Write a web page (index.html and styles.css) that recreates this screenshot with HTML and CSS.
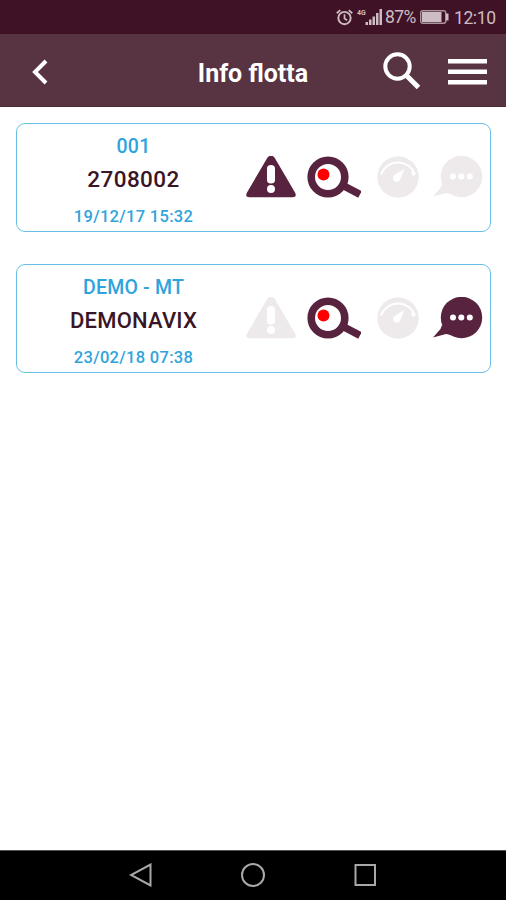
FILE: index.html
```html
<!DOCTYPE html>
<html lang="it">
<head>
  <meta charset="utf-8">
  <title>Info flotta</title>
  <link rel="stylesheet" href="styles.css">
</head>
<body>
  <!-- Icone condivise -->
  <svg class="hidden">
    <symbol id="icon-alert" viewBox="0 0 50 44">
      <path fill="currentColor" fill-rule="evenodd" d="M21.500 1.500Q25 -2.500 28.500 1.500L49 36.500Q51.300 41 46.500 41.300H3.500Q-1.300 41 1 36.500ZM21 12.500V24Q21 27.500 25 27.500Q29 27.500 29 24V12.500Q29 9 25 9Q21 9 21 12.500ZM25 29A4 4 0 1 0 25 37A4 4 0 1 0 25 29Z"/>
    </symbol>
    <symbol id="icon-locate" viewBox="0 0 54 44">
      <circle cx="21" cy="21" r="16.800" fill="none" stroke="currentColor" stroke-width="7.600"/>
      <path d="M36 29.500L53 38.500" stroke="currentColor" stroke-width="7.500"/>
      <circle cx="16.500" cy="18.500" r="6" fill="#ff0000"/>
    </symbol>
    <symbol id="icon-gauge" viewBox="0 0 50 44">
      <circle cx="26" cy="21" r="20.700" fill="currentColor"/>
      <path d="M9 18.500A18 18 0 0 1 43 18.500" fill="none" stroke="#fff" stroke-width="2"/>
      <path d="M39 14.500L43.500 18.500L40.500 20Z" fill="#fff"/>
      <path d="M23.500 18.500L32.500 13L28.500 22.500A3.700 3.700 0 1 1 23.500 18.500Z" fill="#fff"/>
    </symbol>
    <symbol id="icon-message" viewBox="0 0 50 44">
      <circle cx="28.500" cy="20.500" r="20.700" fill="currentColor"/>
      <path d="M9 28L7.500 32L0 40.500L13 37L18 38Z" fill="currentColor"/>
      <g fill="#fff">
        <circle cx="20" cy="20.500" r="3"/>
        <circle cx="28.300" cy="20.500" r="3"/>
        <circle cx="36.800" cy="20.500" r="3"/>
      </g>
    </symbol>
  </svg>

  <div class="status-bar">
    <svg class="alarm" viewBox="0 0 16 16" fill="none" stroke="currentColor">
      <circle cx="8" cy="8.500" r="5.800" stroke-width="1.800"/>
      <path d="M8 5V9L10.500 10.500M.7 4L4 1M15.300 4L12 1" stroke-width="1.600"/>
    </svg>
    <svg class="signal" viewBox="0 0 26 16" fill="currentColor">
      <text x="0" y="6" class="network">4G</text>
      <path d="M8.500 13h2.500v3H8.500zM12 10.500h2.500V16H12zM15.500 7.500H18V16h-2.500zM19 4h2.500v12H19zM22.500 0H25v16h-2.500z"/>
    </svg>
    <span class="percent">87%</span>
    <svg class="battery" viewBox="0 0 29 14">
      <rect x=".7" y=".7" width="25" height="12.600" rx="2" fill="none" stroke="#ab969f" stroke-width="1.400"/>
      <rect x="2" y="2" width="19.500" height="10" fill="currentColor"/>
      <rect x="26" y="3.500" width="2.500" height="7" fill="currentColor"/>
    </svg>
    <span class="clock">12:10</span>
  </div>

  <header class="header">
    <svg class="back" viewBox="0 0 16 26"><path d="M14 2L3 13L14 24" fill="none" stroke="#fff" stroke-width="4"/></svg>
    <h1>Info flotta</h1>
    <svg class="search" viewBox="0 0 38 38" fill="none" stroke="#fff">
      <circle cx="14.500" cy="14.500" r="12.200" stroke-width="4"/>
      <path d="M23 23L35.500 35.500" stroke-width="5"/>
    </svg>
    <svg class="menu" viewBox="0 0 39 26"><path d="M0 0h39v4.500H0zM0 10.500h39V15H0zM0 21h39v4.500H0z" fill="#fff"/></svg>
  </header>

  <main class="fleet">
    <div class="card">
      <div class="info">
        <div class="group">001</div>
        <div class="name">2708002</div>
        <div class="date">19/12/17 15:32</div>
      </div>
      <div class="actions">
        <svg class="icon"><use href="#icon-alert"/></svg>
        <svg class="icon locate"><use href="#icon-locate"/></svg>
        <svg class="icon off"><use href="#icon-gauge"/></svg>
        <svg class="icon off"><use href="#icon-message"/></svg>
      </div>
    </div>
    <div class="card">
      <div class="info">
        <div class="group">DEMO - MT</div>
        <div class="name vehicle">DEMONAVIX</div>
        <div class="date">23/02/18 07:38</div>
      </div>
      <div class="actions">
        <svg class="icon off"><use href="#icon-alert"/></svg>
        <svg class="icon locate"><use href="#icon-locate"/></svg>
        <svg class="icon off"><use href="#icon-gauge"/></svg>
        <svg class="icon"><use href="#icon-message"/></svg>
      </div>
    </div>
  </main>

  <nav class="nav-bar">
    <svg viewBox="0 0 24 24"><path d="M21.500 1.500V22.500L2 12Z"/></svg>
    <svg viewBox="0 0 24 24"><circle cx="12" cy="12" r="11"/></svg>
    <svg viewBox="0 0 24 24"><rect x="2.500" y="2" width="19.500" height="20"/></svg>
  </nav>
</body>
</html>
```

FILE: styles.css
```css
* {
  box-sizing: border-box;
}

body {
  margin: 0;
  height: 900px;
  display: flex;
  flex-direction: column;
  background-color: #fff;
  font-family: Roboto, sans-serif;
  overflow: hidden;
}

svg {
  display: block;
  flex: none;
}

.hidden {
  display: none;
}

.status-bar {
  height: 34px;
  padding-right: 10px;
  display: flex;
  align-items: center;
  justify-content: flex-end;
  background-color: #3f1325;
  color: #cdbcc4;
}

.alarm {
  width: 17px;
  height: 17px;
  margin-right: 4px;
}

.signal {
  width: 26px;
  height: 16px;
  margin-right: 2px;
}

.network {
  font-size: 7px;
  font-weight: bold;
}

.percent,
.clock {
  font-size: 17.5px;
  line-height: 34px;
}

.percent {
  width: 35px;
  letter-spacing: -0.6px;
}

.battery {
  width: 29px;
  height: 14px;
}

.clock {
  width: 42px;
  margin-left: 5px;
  letter-spacing: -0.4px;
  padding-top: 1px;
}

.header {
  height: 73px;
  padding: 3px 19px 0 32px;
  display: flex;
  align-items: center;
  background-color: #583342;
  border-bottom: 1px solid #4d2838;
}

.back {
  width: 16px;
  height: 26px;
}

h1 {
  flex: 1;
  margin: 3px 0 0;
  padding-left: 75px;
  font-size: 25px;
  font-weight: bold;
  text-align: center;
  color: #fff;
}

.search {
  width: 38px;
  height: 38px;
  margin: 0 27px 1px 0;
}

.menu {
  width: 39px;
  height: 26px;
}

.fleet {
  flex: 1;
  padding: 16px 15px 0 16px;
}

.card {
  height: 109px;
  margin-bottom: 32px;
  display: flex;
  align-items: center;
  border: 1.5px solid #68bfe5;
  border-radius: 9px;
}

.info {
  width: 229px;
  padding: 13px 0 0 4px;
  font-weight: 500;
  text-align: center;
  color: #2fa4dc;
}

.group {
  font-size: 19.5px;
  line-height: 30px;
  letter-spacing: 0.2px;
}

.name {
  font-size: 22.5px;
  line-height: 35px;
  letter-spacing: 0.4px;
  color: #3a1526;
}

.vehicle {
  font-size: 22px;
  letter-spacing: 0.2px;
}

.date {
  font-size: 16.5px;
  line-height: 40px;
  letter-spacing: 0.3px;
}

.actions {
  display: flex;
  gap: 11px;
}

.icon {
  width: 50px;
  height: 44px;
  color: #57233f;
}

.locate {
  width: 54px;
}

.off {
  color: #eeeaec;
}

.nav-bar {
  height: 50px;
  padding: 0 129px 1px;
  display: flex;
  align-items: center;
  justify-content: space-between;
  background-color: #000;
  border-top: 1px solid #555;
}

.nav-bar svg {
  width: 24px;
  height: 24px;
  fill: none;
  stroke: #a8a8a8;
  stroke-width: 2;
}
```
